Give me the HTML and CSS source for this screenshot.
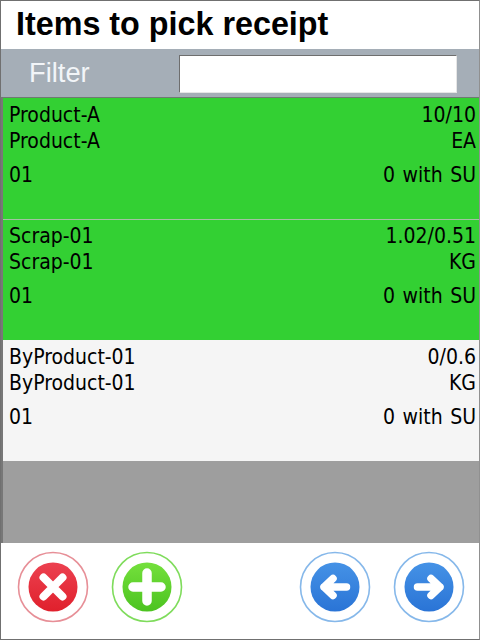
FILE: index.html
```html
<!DOCTYPE html>
<html lang="en">
<head>
<meta charset="utf-8">
<title>Items to pick receipt</title>
<link rel="stylesheet" href="styles.css">
</head>
<body>
<div class="app">
  <header class="title-bar"><h1>Items to pick receipt</h1></header>
  <div class="filter-bar">
    <label class="filter-label" for="filter">Filter</label>
    <input class="filter-input" id="filter" type="text">
  </div>
  <main class="list">
    <section class="row row-done">
      <div class="line"><span>Product-A</span><span>10/10</span></div>
      <div class="line"><span>Product-A</span><span>EA</span></div>
      <div class="line line-gap"><span>01</span><span>0 with SU</span></div>
    </section>
    <section class="row row-done row-sep">
      <div class="line"><span>Scrap-01</span><span>1.02/0.51</span></div>
      <div class="line"><span>Scrap-01</span><span>KG</span></div>
      <div class="line line-gap"><span>01</span><span>0 with SU</span></div>
    </section>
    <section class="row row-open">
      <div class="line"><span>ByProduct-01</span><span>0/0.6</span></div>
      <div class="line"><span>ByProduct-01</span><span>KG</span></div>
      <div class="line line-gap"><span>01</span><span>0 with SU</span></div>
    </section>
  </main>
  <footer class="actions">
    <div class="action-group">
      <button class="btn btn-red" type="button" aria-label="Cancel">
        <svg viewBox="0 0 72 72" width="72" height="72">
          <defs><linearGradient id="gr" x1="0" y1="0" x2="0" y2="1"><stop offset="0" stop-color="#ec4150"/><stop offset="1" stop-color="#e0202c"/></linearGradient></defs>
          <circle cx="36" cy="36" r="34.5" fill="#fff" stroke="#e78f97" stroke-width="1.6"/>
          <circle cx="36" cy="36" r="24.5" fill="url(#gr)"/>
          <path d="M26.5 26.5 L45.5 45.5 M45.5 26.5 L26.5 45.5" stroke="#fff" stroke-width="8" stroke-linecap="round"/>
        </svg>
      </button>
      <button class="btn btn-green" type="button" aria-label="Add">
        <svg viewBox="0 0 72 72" width="72" height="72">
          <defs><linearGradient id="gg" x1="0" y1="0" x2="0" y2="1"><stop offset="0" stop-color="#74e03c"/><stop offset="1" stop-color="#4cc320"/></linearGradient></defs>
          <circle cx="36" cy="36" r="34.5" fill="#fff" stroke="#7fdc5c" stroke-width="1.6"/>
          <circle cx="36" cy="36" r="24.5" fill="url(#gg)"/>
          <path d="M36 22 V50 M22 36 H50" stroke="#fff" stroke-width="9.5" stroke-linecap="round"/>
        </svg>
      </button>
    </div>
    <div class="action-group">
      <button class="btn" type="button" aria-label="Back">
        <svg viewBox="0 0 72 72" width="72" height="72">
          <defs><linearGradient id="gb" x1="0" y1="0" x2="0" y2="1"><stop offset="0" stop-color="#4592e6"/><stop offset="1" stop-color="#2a74d6"/></linearGradient></defs>
          <circle cx="36" cy="36" r="34.5" fill="#fff" stroke="#86b8ea" stroke-width="1.6"/>
          <circle cx="36" cy="36" r="24.5" fill="url(#gb)"/>
          <path d="M25 36 H47.5 M34 27.5 L25 36 L34 44.5" fill="none" stroke="#fff" stroke-width="7.5" stroke-linecap="round" stroke-linejoin="round"/>
        </svg>
      </button>
      <button class="btn" type="button" aria-label="Next">
        <svg viewBox="0 0 72 72" width="72" height="72">
          <defs><linearGradient id="gb2" x1="0" y1="0" x2="0" y2="1"><stop offset="0" stop-color="#4592e6"/><stop offset="1" stop-color="#2a74d6"/></linearGradient></defs>
          <circle cx="36" cy="36" r="34.5" fill="#fff" stroke="#86b8ea" stroke-width="1.6"/>
          <circle cx="36" cy="36" r="24.5" fill="url(#gb2)"/>
          <path d="M24.5 36 H47 M38 27.5 L47 36 L38 44.5" fill="none" stroke="#fff" stroke-width="7.5" stroke-linecap="round" stroke-linejoin="round"/>
        </svg>
      </button>
    </div>
  </footer>
</div>
</body>
</html>
```
FILE: styles.css
```css
* { box-sizing: border-box; }
html, body { margin: 0; padding: 0; }
body { width: 480px; height: 640px; overflow: hidden; background: #fff; }
.app {
  width: 480px;
  height: 640px;
  display: flex;
  flex-direction: column;
  border: 1px solid #707070;
  border-right-color: #909090;
}
.title-bar { height: 48px; background: #fff; flex: none; }
.title-bar h1 {
  margin: 0;
  padding: 5px 0 0 15px;
  font: bold 32.3px/36px "Liberation Sans", Arial, sans-serif;
  color: #000;
}
.filter-bar {
  height: 48px;
  flex: none;
  background: #a5aeb7;
  display: flex;
  align-items: center;
  padding: 0 22px 0 28px;
  justify-content: space-between;
}
.filter-label {
  font: 27.3px/32px "Liberation Sans", Arial, sans-serif;
  color: #f2f5f8;
}
.filter-input {
  width: 278px;
  height: 38px;
  margin-top: 1px;
  background: #fff;
  border: 1px solid #e6e6e6;
  border-top: 1px solid #6e6e6e;
  border-left: 1px solid #6e6e6e;
  outline: none;
  padding: 0;
}
.list {
  height: 446px;
  flex: none;
  background: #9e9e9e;
  border-top: 1px solid #6f7a72;
  border-left: 2px solid #777;
  display: flex;
  flex-direction: column;
}
.row { height: 121px; flex: none; padding: 4px 3px 0 6px; font: 21px/26px "DejaVu Sans Condensed", "DejaVu Sans", sans-serif; word-spacing: 1.5px; color: #000; }
.row-done { background: #33d033; }
.row-sep { border-top: 1px solid #a3c2a3; padding-top: 3px; }
.row-open { background: #f5f5f5; height: 121px; }
.line { display: flex; justify-content: space-between; height: 26px; }
.line-gap { margin-top: 8px; }
.actions {
  flex: 1;
  background: #fff;
  display: flex;
  justify-content: space-between;
  align-items: flex-start;
  padding: 8px 14px 0 16px;
}
.action-group { display: flex; gap: 22px; }
.btn { width: 72px; height: 72px; padding: 0; border: 0; background: none; display: block; }
.btn svg { display: block; }
```
